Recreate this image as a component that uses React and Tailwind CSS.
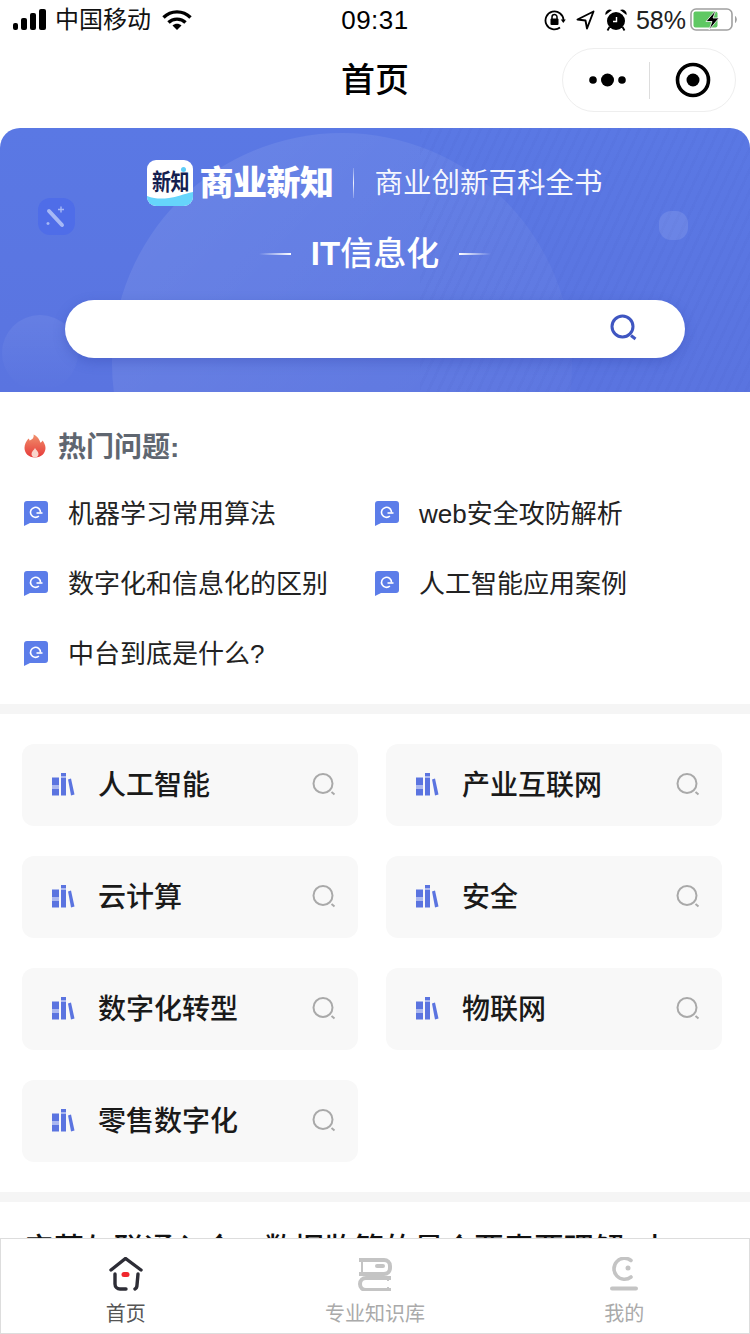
const Signal = () => (
  <svg width="34" height="22" viewBox="0 0 34 22" fill="#000">
    <rect x="0" y="14" width="5" height="7" rx="2" />
    <rect x="8" y="9" width="6" height="12" rx="2" />
    <rect x="17" y="4" width="6" height="17" rx="2" />
    <rect x="26" y="0" width="7" height="21" rx="2" />
  </svg>
)

const Wifi = () => (
  <svg width="30" height="22" viewBox="0 0 30 22" fill="none" stroke="#000" strokeWidth="3.4">
    <path d="M1.5 8.5C9 1 21 1 28.5 8.5" />
    <path d="M6.5 13.5C11 9 19 9 23.5 13.5" />
    <path d="M10.5 16.5L15 21l4.5-4.5C17 14 13 14 10.5 16.5Z" fill="#000" stroke="none" />
  </svg>
)

const RotationLock = () => (
  <svg width="22" height="22" viewBox="0 0 22 22" fill="none">
    <path d="M19.5 11A9 9 0 1 0 16 18.5" stroke="#000" strokeWidth="1.8" />
    <path d="M21.8 10.5h-5l2.5 3.4Z" fill="#000" />
    <rect x="6.5" y="9.5" width="8" height="6.5" rx="1" fill="#000" />
    <path d="M8 10V8a2.5 2.5 0 0 1 5 0v2" stroke="#000" strokeWidth="1.5" />
  </svg>
)

const LocationArrow = () => (
  <svg width="19" height="20" viewBox="0 0 19 20" fill="none">
    <path d="M17.5 1.5L1.5 9.5l8 1 1.5 8Z" stroke="#000" strokeWidth="1.9" strokeLinejoin="round" />
  </svg>
)

const Alarm = () => (
  <svg width="22" height="22" viewBox="0 0 22 22" fill="#000">
    <circle cx="11" cy="12" r="9" />
    <path d="M0.500 6A4.500 4.500 0 0 1 7 1Z M21.500 6A4.500 4.500 0 0 0 15 1Z" />
    <path d="M4.500 18l-2 3.500 M17.500 18l2 3.500" stroke="#000" strokeWidth="1.800" />
    <path d="M11.500 8v4.500H8" stroke="#fff" strokeWidth="1.400" fill="none" />
  </svg>
)

const Battery = () => (
  <svg width="47" height="24" viewBox="0 0 47 24" fill="none">
    <rect x="1" y="1" width="41" height="21" rx="5" stroke="#a0a0a0" strokeWidth="1.6" />
    <rect x="3.5" y="3.5" width="24" height="16" rx="2" fill="#5fc863" />
    <path d="M45 8v7c1.200-.6 1.800-2 1.800-3.500S46.200 8.600 45 8Z" fill="#a0a0a0" />
    <path d="M26 2L16 13.500h6L19 22l10-12h-6Z" fill="#000" stroke="#fff" strokeWidth="0.8" />
  </svg>
)

const CapsuleDots = () => (
  <svg width="38" height="16" viewBox="0 0 38 16" fill="#000">
    <circle cx="4" cy="8" r="3.800" />
    <circle cx="18.500" cy="8" r="6.500" />
    <circle cx="33" cy="8" r="3.800" />
  </svg>
)

const CapsuleTarget = () => (
  <svg width="36" height="36" viewBox="0 0 36 36" fill="none">
    <circle cx="18" cy="18" r="15.500" stroke="#000" strokeWidth="3.600" />
    <circle cx="18" cy="18" r="6.500" fill="#000" />
  </svg>
)

const Flame = () => (
  <svg width="22" height="24" viewBox="0 0 22 24">
    <defs>
      <linearGradient id="flame" x1="0" y1="0" x2="0" y2="1">
        <stop offset="0" stopColor="#f0906c" />
        <stop offset="1" stopColor="#e63a3a" />
      </linearGradient>
    </defs>
    <path
      d="M9.500 0.500C10.500 4 7.500 6 5.500 6.500 5.500 5.500 5 5 4.500 4.500 2 7.500 0.500 10.500 0.500 14c0 5 4 9.500 10.500 9.500s10.500-4.500 10.500-9.500c0-3-1.500-5.500-3-7.500-.5 1-1 1.800-2 2.200C15.500 6 14 2.500 9.500 0.500Z"
      fill="url(#flame)"
    />
    <path d="M11 14c-1 2-3.500 3.500-3.500 6 0 2 1.500 3.500 3.500 3.500s3.500-1.500 3.500-3.500c0-2.500-2.500-4-3.500-6Z" fill="#f9d5cc" />
  </svg>
)

const Bubble = () => (
  <svg width="24" height="25" viewBox="0 0 24 25">
    <path d="M3 0h18a3 3 0 0 1 3 3v16a3 3 0 0 1-3 3H6l-6 3V3a3 3 0 0 1 3-3Z" fill="#5c7de9" />
    <path d="M16.500 11.500a5 5 0 1 0-1.600 3.500" fill="none" stroke="#fff" strokeWidth="1.600" />
    <path d="M12.500 12h6" stroke="#fff" strokeWidth="1.600" />
  </svg>
)

const Books = () => (
  <svg width="24" height="24" viewBox="0 0 24 24">
    <rect x="1" y="4.500" width="7" height="18" fill="#5b74e0" />
    <rect x="1" y="12" width="7" height="4" fill="#aab7f0" />
    <rect x="10" y="0" width="5" height="22.500" fill="#5b74e0" />
    <rect x="10" y="3" width="5" height="2" fill="#aab7f0" />
    <path d="M17 6.500l3-1 3.500 16-3.500 1Z" fill="#5b74e0" />
  </svg>
)

const SearchGray = () => (
  <svg width="24" height="24" viewBox="0 0 24 24" fill="none">
    <circle cx="11" cy="10.500" r="9.500" stroke="#a9a9a9" strokeWidth="2" />
    <path d="M19.500 19l3 2.500" stroke="#a9a9a9" strokeWidth="2" />
  </svg>
)

const SearchBlue = () => (
  <svg width="28" height="28" viewBox="0 0 28 28" fill="none">
    <circle cx="12.500" cy="12.500" r="10.500" stroke="#3f56c1" strokeWidth="3" />
    <path d="M21 21.500l4.500 3.500" stroke="#3f56c1" strokeWidth="3" />
  </svg>
)

const HomeIcon = () => (
  <svg width="34" height="34" viewBox="0 0 34 34" fill="none" stroke="#2d2d36" strokeWidth="3.400" strokeLinecap="round">
    <path d="M2 13L16.500 1.500 32 13" />
    <path d="M6 17v10a5 5 0 0 0 5 5h6" />
    <path d="M29 17l-1 11c0 2-1 3.500-2 4" />
    <rect x="12.500" y="15" width="8" height="5" rx="2.500" fill="#f0282d" stroke="none" />
  </svg>
)

const BookIcon = () => (
  <svg width="34" height="34" viewBox="0 0 34 34" fill="none" stroke="#c4c4c4" strokeWidth="4">
    <path d="M1 3h25a6 6 0 0 1 6 6v2a6 6 0 0 1-6 6H1" />
    <path d="M4 3v14" strokeWidth="2" />
    <path d="M19 9h6" strokeLinecap="round" />
    <path d="M33 21H8a6 6 0 0 0 0 12h25" />
    <path d="M30 21v3M30 30v3" strokeWidth="2" />
  </svg>
)

const MeIcon = () => (
  <svg width="28" height="34" viewBox="0 0 28 34" fill="none" stroke="#c4c4c4" strokeWidth="3.600" strokeLinecap="round">
    <path d="M21 3.500A10.500 10.500 0 1 0 21 20" />
    <circle cx="18" cy="11" r="2.500" fill="#c4c4c4" stroke="none" />
    <path d="M2 31.500h24" strokeWidth="4" />
  </svg>
)

const Wand = () => (
  <svg width="37" height="37" viewBox="0 0 37 37" fill="none">
    <rect width="37" height="37" rx="12" fill="#4f6de8" />
    <path d="M11 13l13 14" stroke="#a6b8f5" strokeWidth="4" strokeLinecap="round" />
    <path d="M23 8.500v6M20 11.500h6M10 24v3M8.500 25.500h3" stroke="#a6b8f5" strokeWidth="1.400" />
  </svg>
)

const Logo = () => (
  <div className="relative w-[46px] h-[46px] rounded-[9px] bg-white overflow-hidden flex items-center justify-center shrink-0">
    <span className="relative top-[-1px] scale-y-120 text-[19px] leading-none font-bold tracking-[-0.5px] text-[#14204f]">新知</span>
    <svg className="absolute left-0 bottom-0" width="46" height="14" viewBox="0 0 46 14">
      <path d="M0 4c8 3 14 3 22 2s14-4 24-6v14H0Z" fill="#66d5fb" />
    </svg>
    <span className="absolute right-[7px] top-[7px] w-[5px] h-[5px] rounded-full bg-[#5dcdf7]" />
  </div>
)

const questions = [
  '机器学习常用算法',
  'web安全攻防解析',
  '数字化和信息化的区别',
  '人工智能应用案例',
  '中台到底是什么?',
]

const topics = ['人工智能', '产业互联网', '云计算', '安全', '数字化转型', '物联网', '零售数字化']

const Tab = ({ icon, label, color }) => (
  <div className="flex flex-col items-center">
    <div className="h-[34px] flex items-center">{icon}</div>
    <span className={`mt-[9px] text-[20px] leading-[28px] ${color}`}>{label}</span>
  </div>
)

const App = () => {
  return (
    <div className="w-[750px] h-[1334px] flex flex-col overflow-hidden bg-white font-['Liberation_Sans','Noto_Sans_CJK_SC',sans-serif]">
      <div className="h-[40px] shrink-0 grid grid-cols-3 items-center px-[13px]">
        <div className="flex items-center">
          <Signal />
          <span className="ml-[8px] text-[24px] leading-[32px] text-[#111]">中国移动</span>
          <span className="ml-[11px]"><Wifi /></span>
        </div>
        <div className="text-center text-[26px] leading-[32px] font-medium tracking-[0.5px] text-black">09:31</div>
        <div className="flex items-center justify-end">
          <RotationLock />
          <span className="ml-[10px]"><LocationArrow /></span>
          <span className="ml-[10px]"><Alarm /></span>
          <span className="ml-[9px] text-[25px] leading-[32px] text-[#222]">58%</span>
          <span className="ml-[4px]"><Battery /></span>
        </div>
      </div>

      <div className="h-[88px] shrink-0 grid grid-cols-3 items-center px-[14px] pb-[8px]">
        <div />
        <div className="text-center text-[34px] leading-[44px] font-medium text-black">首页</div>
        <div className="flex justify-end">
          <div className="w-[174px] h-[64px] rounded-full border border-[#eeeeee] flex items-center">
            <div className="w-[86px] flex justify-center pl-[3px]"><CapsuleDots /></div>
            <div className="w-px h-[37px] bg-[#dddddd]" />
            <div className="flex-1 flex justify-center"><CapsuleTarget /></div>
          </div>
        </div>
      </div>

      <div className="flex-1 min-h-0 overflow-hidden">
        <div className="relative h-[264px] rounded-t-[20px] overflow-hidden bg-gradient-to-b from-[#5a78e4] to-[#5a74e0] flex flex-col items-center pt-[32px]">
          <div className="absolute left-[112px] top-[5px] w-[460px] h-[460px] rounded-full bg-gradient-to-br from-white/10 to-white/0" />
          <div className="absolute left-[2px] top-[187px] w-[76px] h-[76px] rounded-full bg-gradient-to-b from-white/7 to-white/0" />
          <div className="absolute inset-y-0 right-0 w-[330px] bg-[repeating-linear-gradient(115deg,rgba(60,80,180,0.06)_0px,rgba(60,80,180,0.06)_3px,transparent_3px,transparent_9px)]" />
          <div className="absolute left-[38px] top-[70px]"><Wand /></div>
          <div className="absolute left-[659px] top-[83px] w-[29px] h-[29px] rounded-[42%] bg-white/10" />

          <div className="relative flex items-center h-[46px]">
            <Logo />
            <span className="ml-[6px] text-[34px] leading-[46px] font-black tracking-[-0.5px] text-white">商业新知</span>
            <div className="ml-[20px] w-px h-[30px] bg-gradient-to-b from-white/20 via-white/90 to-white/20" />
            <span className="ml-[20px] text-[28.500px] leading-[46px] text-white/95">商业创新百科全书</span>
          </div>

          <div className="relative mt-[24px] h-[48px] flex items-center">
            <div className="w-[32px] h-[2px] bg-gradient-to-r from-white/0 to-white" />
            <span className="mx-[20px] text-[33px] leading-[48px] font-medium text-white">
              <span className="font-bold">IT</span>信息化
            </span>
            <div className="w-[32px] h-[2px] bg-gradient-to-r from-white to-white/0" />
          </div>

          <div className="relative mt-[22px] w-[620px] h-[58px] rounded-full bg-white shadow-[0_4px_12px_rgba(50,70,170,0.35)] flex items-center justify-end pr-[47px] pb-[2px]">
            <SearchBlue />
          </div>
        </div>

        <div className="px-[24px] pt-[36px] pb-[16px]">
          <div className="h-[36px] flex items-center">
            <Flame />
            <span className="ml-[12px] pt-[3px] text-[28px] leading-[36px] font-bold text-[#5f6670]">热门问题:</span>
          </div>
          <div className="mt-[14px] grid grid-cols-[351px_1fr]">
            {questions.map((q) => (
              <div key={q} className="h-[70px] flex items-center">
                <Bubble />
                <span className="ml-[20px] pt-[1px] text-[26px] leading-[36px] text-[#222222]">{q}</span>
              </div>
            ))}
          </div>
        </div>

        <div className="h-[10px] bg-[#f5f5f5]" />

        <div className="px-[22px] py-[30px] grid grid-cols-[336px_336px] gap-x-[28px] gap-y-[30px]">
          {topics.map((t) => (
            <div key={t} className="h-[82px] rounded-[12px] bg-[#f8f8f8] flex items-center pl-[29px] pr-[22px]">
              <Books />
              <span className="ml-[23px] pt-[2px] flex-1 text-[28px] leading-[36px] font-medium text-[#1a1a1a]">{t}</span>
              <SearchGray />
            </div>
          ))}
        </div>

        <div className="h-[10px] bg-[#f5f5f5]" />

        <div className="pl-[24px] pt-[27px] whitespace-nowrap text-[30px] leading-[40px] font-medium text-[#111111]">
          产营与联通入合，数据监管的最个要素要理解3上
        </div>
      </div>

      <div className="h-[96px] shrink-0 border border-[#dddddd] bg-white grid grid-cols-3 pt-[18px]">
        <Tab icon={<HomeIcon />} label="首页" color="text-[#555555]" />
        <Tab icon={<BookIcon />} label="专业知识库" color="text-[#aaaaaa]" />
        <Tab icon={<MeIcon />} label="我的" color="text-[#aaaaaa]" />
      </div>
    </div>
  )
}

export default App
